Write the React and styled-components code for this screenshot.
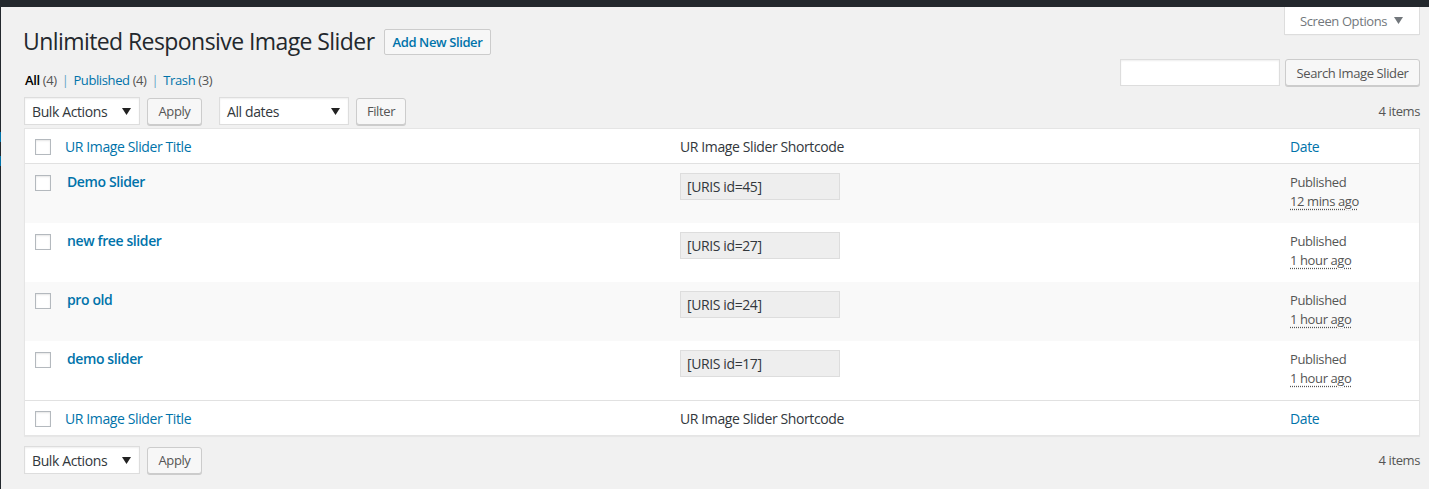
import styled, { createGlobalStyle } from 'styled-components';

const GlobalStyle = createGlobalStyle`
    html, body {
        margin: 0;
        padding: 0;
        background: #f1f1f1;
        font-family: "Open Sans", "Noto Sans", sans-serif;
        font-size: 13px;
        letter-spacing: -0.03em;
        color: #444;
    }
    * { box-sizing: border-box; }
`

const sliders = [
    { title: "Demo Slider", id: 45, ago: "12 mins ago" },
    { title: "new free slider", id: 27, ago: "1 hour ago" },
    { title: "pro old", id: 24, ago: "1 hour ago" },
    { title: "demo slider", id: 17, ago: "1 hour ago" },
]

const AdminBar = styled.div`
    height: 7px;
    background: #23282d;
`

const Body = styled.div`
    display: flex;
    min-height: 482px;
`

const MenuEdge = styled.div`
    width: 1px;
    display: flex;
    flex-direction: column;
    background: #23282d;
`

const MenuMark = styled.div`
    height: ${p => p.h}px;
    background: ${p => p.blue ? "#0073aa" : "#23282d"};
`

const Wrap = styled.div`
    flex: 1;
    padding: 0 9px 0 23px;
`

const Header = styled.div`
    display: flex;
    justify-content: space-between;
    align-items: flex-start;
`

const TitleGroup = styled.div`
    display: flex;
    align-items: center;
    margin-top: 20px;
`

const PageTitle = styled.h1`
    margin: 0 9px 0 -1px;
    font-size: 23px;
    font-weight: 400;
    line-height: 29px;
    letter-spacing: -0.025em;
    color: #23282d;
`

const TitleAction = styled.a`
    display: inline-flex;
    align-items: center;
    height: 26px;
    padding: 0 8px;
    border: 1px solid #ccc;
    border-radius: 2px;
    background: #f7f7f7;
    color: #0073aa;
    font-size: 13px;
    font-weight: 600;
`

const ScreenTab = styled.div`
    display: flex;
    align-items: center;
    gap: 7px;
    height: 28px;
    width: 136px;
    padding-left: 15px;
    background: #fff;
    border: 1px solid #ddd;
    border-top: none;
    box-shadow: 0 1px 1px -1px rgba(0,0,0,.1);
    color: #72777c;
    font-size: 13px;
`

const Caret = ({ color }) => (
    <svg width="9" height="7" viewBox="0 0 9 7">
        <polygon points="0,0 9,0 4.5,7" fill={color} />
    </svg>
)

const FilterRow = styled.div`
    display: flex;
    justify-content: space-between;
    align-items: flex-start;
    margin-top: 3px;
`

const Views = styled.div`
    display: flex;
    gap: 5px;
    padding-top: 12px;
    line-height: 18px;
    color: #666;
    padding-left: 1px;
`

const ViewLink = styled.span`
    color: ${p => p.current ? "#000" : "#0073aa"};
    font-weight: ${p => p.current ? 600 : 400};
`

const Count = styled.span`
    color: #555;
`

const Sep = styled.span`
    color: #0073aa;
    opacity: .6;
`

const SearchBox = styled.div`
    display: flex;
    gap: 5px;
`

const SearchInput = styled.div`
    width: 160px;
    height: 27px;
    background: #fff;
    border: 1px solid #ddd;
    box-shadow: inset 0 1px 2px rgba(0,0,0,.07);
`

const Button = styled.div`
    display: flex;
    align-items: center;
    justify-content: center;
    width: ${p => p.w}px;
    height: 27px;
    margin-right: ${p => p.gap || 0}px;
    background: #f7f7f7;
    border: 1px solid #ccc;
    border-radius: 3px;
    box-shadow: 0 1px 0 #ccc;
    color: #555;
    font-size: 13px;
`

const TableNav = styled.div`
    display: flex;
    align-items: center;
    height: 28px;
    margin: ${p => p.bottom ? "10px 0 0" : "8px 0 3px"};
`

const Select = styled.div`
    display: flex;
    align-items: center;
    justify-content: space-between;
    width: ${p => p.w}px;
    height: 28px;
    padding: 0 8px 0 7px;
    margin-right: 7px;
    background: #fff;
    border: 1px solid #ddd;
    box-shadow: inset 0 1px 2px rgba(0,0,0,.07);
    color: #32373c;
    font-size: 14px;
`

const ItemCount = styled.div`
    margin-left: auto;
    color: #555;
    font-size: 13px;
`

const Table = styled.div`
    background: #fff;
    border: 1px solid #e5e5e5;
    box-shadow: 0 1px 1px rgba(0,0,0,.04);
`

const Row = styled.div`
    display: grid;
    grid-template-columns: 30px 615fr 610fr 139px;
    height: ${p => p.head ? 35 : 59}px;
    background: ${p => p.alt ? "#f9f9f9" : "#fff"};
    border-bottom: ${p => p.divide === "bottom" ? "1px solid #e1e1e1" : "none"};
    border-top: ${p => p.divide === "top" ? "1px solid #e1e1e1" : "none"};
`

const CheckCell = styled.div`
    padding: ${p => p.head ? 10 : 11}px 0 0 10px;
`

const Checkbox = styled.div`
    width: 16px;
    height: 16px;
    background: #fff;
    border: 1px solid #b4b9be;
    box-shadow: inset 0 1px 2px rgba(0,0,0,.1);
`

const HeadCell = styled.div`
    padding: 8px 10px 0;
    font-size: 14px;
    line-height: 19px;
    color: ${p => p.link ? "#0073aa" : "#32373c"};
`

const TitleCell = styled.div`
    padding: 8px 12px 0;
    font-size: 14px;
    font-weight: 600;
    line-height: 20px;
    color: #0073aa;
`

const ShortcodeCell = styled.div`
    padding: 9px 10px 0;
`

const Shortcode = styled.div`
    width: 160px;
    height: 27px;
    padding: 0 6px;
    display: flex;
    align-items: center;
    background: #eee;
    border: 1px solid #ddd;
    color: #32373c;
    font-size: 14px;
`

const DateCell = styled.div`
    padding: 9px 10px 0;
    line-height: 19px;
    color: #555;
    font-size: 13px;
`

const Ago = styled.span`
    text-decoration: underline dotted;
    text-underline-offset: 3px;
`

function Nav({ bottom }) {
    return (
        <TableNav bottom={bottom}>
            <Select w={116}>Bulk Actions <Caret color="#222" /></Select>
            <Button w={55} gap={17}>Apply</Button>
            {!bottom && <Select w={130}>All dates <Caret color="#222" /></Select>}
            {!bottom && <Button w={50}>Filter</Button>}
            <ItemCount>4 items</ItemCount>
        </TableNav>
    )
}

function HeadRow({ divide }) {
    return (
        <Row head divide={divide}>
            <CheckCell head><Checkbox /></CheckCell>
            <HeadCell link>UR Image Slider Title</HeadCell>
            <HeadCell>UR Image Slider Shortcode</HeadCell>
            <HeadCell link>Date</HeadCell>
        </Row>
    )
}

export default function App() {
    return (
        <>
            <GlobalStyle />
            <AdminBar />
            <Body>
                <MenuEdge>
                    <MenuMark h={125} />
                    <MenuMark h={10} blue />
                    <MenuMark h={14} />
                    <MenuMark h={10} blue />
                </MenuEdge>
                <Wrap>
                    <Header>
                        <TitleGroup>
                            <PageTitle>Unlimited Responsive Image Slider</PageTitle>
                            <TitleAction>Add New Slider</TitleAction>
                        </TitleGroup>
                        <ScreenTab>Screen Options <Caret color="#72777c" /></ScreenTab>
                    </Header>
                    <FilterRow>
                        <Views>
                            <span><ViewLink current>All</ViewLink> <Count>(4)</Count></span>
                            <Sep>|</Sep>
                            <span><ViewLink>Published</ViewLink> <Count>(4)</Count></span>
                            <Sep>|</Sep>
                            <span><ViewLink>Trash</ViewLink> <Count>(3)</Count></span>
                        </Views>
                        <SearchBox>
                            <SearchInput />
                            <Button w={135}>Search Image Slider</Button>
                        </SearchBox>
                    </FilterRow>
                    <Nav />
                    <Table>
                        <HeadRow divide="bottom" />
                        {sliders.map((s, i) => (
                            <Row key={s.id} alt={i % 2 === 0}>
                                <CheckCell><Checkbox /></CheckCell>
                                <TitleCell>{s.title}</TitleCell>
                                <ShortcodeCell><Shortcode>[URIS id={s.id}]</Shortcode></ShortcodeCell>
                                <DateCell>
                                    Published<br />
                                    <Ago>{s.ago}</Ago>
                                </DateCell>
                            </Row>
                        ))}
                        <HeadRow divide="top" />
                    </Table>
                    <Nav bottom />
                </Wrap>
            </Body>
        </>
    )
}
